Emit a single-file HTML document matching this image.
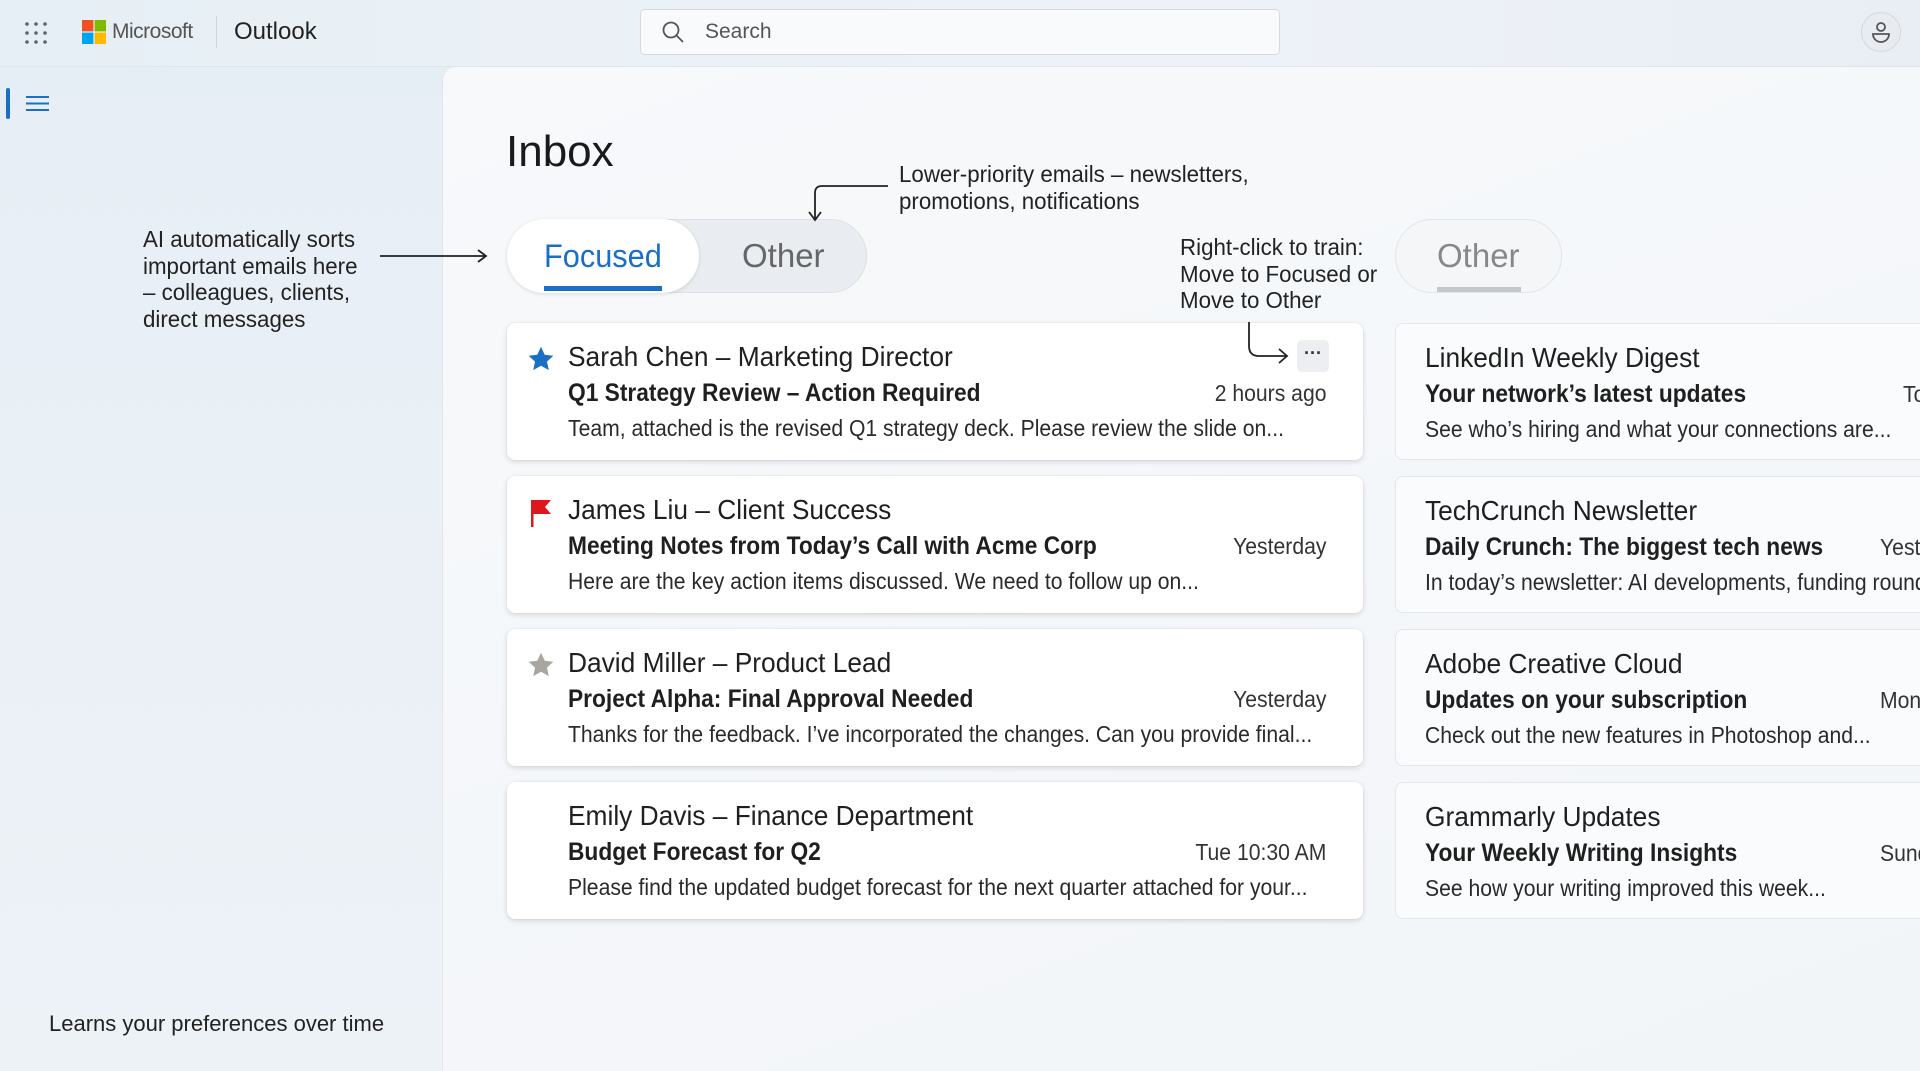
<!DOCTYPE html>
<html><head><meta charset="utf-8"><style>
*{margin:0;padding:0;box-sizing:border-box}
body{width:1920px;height:1071px;overflow:hidden;position:relative;background:linear-gradient(180deg,#e6eef5,#edf2f7);font-family:"Liberation Sans",sans-serif;color:#1f1f1f}
.a{position:absolute;white-space:nowrap}
.top{position:absolute;left:0;top:0;width:1920px;height:67px;background:linear-gradient(90deg,#e6eff5,#eef2f8 60%,#e9eef5);border-bottom:1px solid #dfe5ec}
.main{position:absolute;left:442px;top:67px;width:1478px;height:1004px;background:linear-gradient(160deg,#f7f9fb,#f2f5f8);border-top-left-radius:14px;border-left:1px solid #e2e7ee}
.card{position:absolute;left:507px;width:856px;height:137px;background:#fff;border-radius:8px;box-shadow:0 2px 6px rgba(0,0,0,.13),0 0 1px rgba(0,0,0,.15)}
.rc{position:absolute;left:1395px;width:560px;height:137px;background:#fafbfc;border-radius:8px;border:1px solid #e3e7ec}
.n,.s,.p,.t{white-space:nowrap;transform-origin:left center}
.n{position:absolute;left:61px;top:16px;font-size:28px;line-height:36px;transform:scaleX(.94)}
.s{position:absolute;left:61px;top:53px;font-size:25px;line-height:34px;font-weight:bold;transform:scaleX(.91)}
.p{position:absolute;left:61px;top:89px;font-size:23.5px;line-height:32px;color:#2a2a2a;transform:scaleX(.90)}
.t{position:absolute;right:37px;top:54px;font-size:23px;line-height:32px;color:#333;transform:scaleX(.92);transform-origin:right center}
.rc .n,.rc .s,.rc .p{left:29px}
.rc .t{right:auto;left:484px;transform-origin:left center}
.ic{position:absolute;left:28px;top:23px}
.ann{font-size:23px;line-height:26.5px;color:#222;transform:scaleX(.97);transform-origin:left top}
</style></head><body>
<div class="top"></div>
<svg class="a" style="left:24px;top:21px" width="24" height="24" viewBox="0 0 24 24" fill="#5a6470"><circle cx="3" cy="3" r="1.8"/><circle cx="12" cy="3" r="1.8"/><circle cx="21" cy="3" r="1.8"/><circle cx="3" cy="12" r="1.8"/><circle cx="12" cy="12" r="1.8"/><circle cx="21" cy="12" r="1.8"/><circle cx="3" cy="21" r="1.8"/><circle cx="12" cy="21" r="1.8"/><circle cx="21" cy="21" r="1.8"/></svg>
<svg class="a" style="left:82px;top:20px" width="24" height="24"><rect x="0" y="0" width="11.4" height="11.4" fill="#f25022"/><rect x="12.6" y="0" width="11.4" height="11.4" fill="#7fba00"/><rect x="0" y="12.6" width="11.4" height="11.4" fill="#00a4ef"/><rect x="12.6" y="12.6" width="11.4" height="11.4" fill="#ffb900"/></svg>
<div class="a" style="left:112px;top:18px;font-size:21px;color:#555;line-height:28px;letter-spacing:-0.5px">Microsoft</div>
<div class="a" style="left:216px;top:16px;width:1px;height:32px;background:#cfd6de"></div>
<div class="a" style="left:234px;top:16px;font-size:24px;color:#222;line-height:32px">Outlook</div>
<div class="a" style="left:640px;top:9px;width:640px;height:46px;background:#f8fafc;border:1px solid #d5dbe2;border-radius:5px"></div>
<svg class="a" style="left:661px;top:20px" width="24" height="24" fill="none" stroke="#555" stroke-width="1.8"><circle cx="10" cy="10" r="7.5"/><path d="M15.5 15.5 22 22"/></svg>
<div class="a" style="left:705px;top:18px;font-size:21px;color:#555;line-height:28px">Search</div>
<div class="a" style="left:1861px;top:12px;width:40px;height:40px;border-radius:50%;background:#e8ebef;border:1px solid #d3d8de"></div>
<svg class="a" style="left:1869px;top:20px" width="24" height="24" fill="none" stroke="#555" stroke-width="1.8"><circle cx="12" cy="7" r="4"/><path d="M4 14h16c0 5-4 8-8 8s-8-3-8-8z"/></svg>
<div class="a" style="left:6px;top:88px;width:4px;height:31px;background:#1a6fc4;border-radius:2px"></div>
<svg class="a" style="left:26px;top:95px" width="23" height="17" stroke="#1a6fc4" stroke-width="2"><path d="M0 2h23M0 8.5h23M0 15h23"/></svg>
<div class="main"></div>
<div class="a" style="left:506px;top:126px;font-size:44px;line-height:52px;color:#1a1a1a">Inbox</div>
<div class="a" style="left:507px;top:219px;width:360px;height:74px;border-radius:37px;background:#e9ecf0;border:1px solid #dde1e6"></div>
<div class="a" style="left:507px;top:219px;width:192px;height:74px;border-radius:37px;background:#fff;box-shadow:0 1px 4px rgba(0,0,0,.12)"></div>
<div class="a" style="left:544px;top:236px;font-size:32px;line-height:40px;color:#1a6fc4;transform:scaleX(.96);transform-origin:left">Focused</div>
<div class="a" style="left:544px;top:286px;width:118px;height:5px;background:#1a6fc4"></div>
<div class="a" style="left:742px;top:236px;font-size:33px;line-height:40px;color:#666">Other</div>
<div class="a ann" style="left:899px;top:161px">Lower-priority emails – newsletters,<br>promotions, notifications</div>
<svg class="a" style="left:800px;top:175px" width="100" height="55" fill="none" stroke="#222" stroke-width="1.8"><path d="M88 11H22Q15 11 15 18V44"/><path d="M9 37l6 8 6-8"/></svg>
<div class="a ann" style="left:143px;top:226px">AI automatically sorts<br>important emails here<br>– colleagues, clients,<br>direct messages</div>
<svg class="a" style="left:378px;top:248px" width="112" height="16" fill="none" stroke="#222" stroke-width="1.8"><path d="M2 8H108"/><path d="M100 2l8 6-8 6"/></svg>
<div class="a ann" style="left:1180px;top:234px">Right-click to train:<br>Move to Focused or<br>Move to Other</div>
<div class="a" style="left:1395px;top:219px;width:167px;height:74px;border-radius:37px;background:#f4f6f8;border:1px solid #e2e5e9"></div>
<div class="a" style="left:1437px;top:236px;font-size:33px;line-height:40px;color:#888">Other</div>
<div class="a" style="left:1437px;top:287px;width:84px;height:5px;background:#c4c7cb"></div>

<div class="card" style="top:323px">
<svg class="ic" style="left:20px;top:22px" width="28" height="28" viewBox="0 0 24 24" fill="#1a6fc4"><path d="M12 1.5l3.2 6.9 7.4.8-5.5 5 1.6 7.3L12 17.8l-6.7 3.7 1.6-7.3-5.5-5 7.4-.8z"/></svg>
<div class="n">Sarah Chen – Marketing Director</div><div class="s">Q1 Strategy Review – Action Required</div><div class="t">2 hours ago</div><div class="p">Team, attached is the revised Q1 strategy deck. Please review the slide on...</div>
<div class="a" style="left:790px;top:17px;width:32px;height:32px;border-radius:5px;background:#eceef1;text-align:center;font-size:18px;line-height:26px;color:#333;font-weight:bold">···</div>
</div>
<div class="card" style="top:476px">
<svg class="ic" style="left:22px;top:22px" width="24" height="30" fill="#e0161d"><path d="M2 2h20l-6 7 6 7H4.5v13H2z"/></svg>
<div class="n">James Liu – Client Success</div><div class="s">Meeting Notes from Today’s Call with Acme Corp</div><div class="t">Yesterday</div><div class="p">Here are the key action items discussed. We need to follow up on...</div>
</div>
<div class="card" style="top:629px">
<svg class="ic" style="left:20px;top:22px" width="28" height="28" viewBox="0 0 24 24" fill="#a9a6a2"><path d="M12 1.5l3.2 6.9 7.4.8-5.5 5 1.6 7.3L12 17.8l-6.7 3.7 1.6-7.3-5.5-5 7.4-.8z"/></svg>
<div class="n">David Miller – Product Lead</div><div class="s">Project Alpha: Final Approval Needed</div><div class="t">Yesterday</div><div class="p">Thanks for the feedback. I’ve incorporated the changes. Can you provide final...</div>
</div>
<div class="card" style="top:782px">
<div class="n">Emily Davis – Finance Department</div><div class="s">Budget Forecast for Q2</div><div class="t">Tue 10:30 AM</div><div class="p">Please find the updated budget forecast for the next quarter attached for your...</div>
</div>
<svg class="a" style="left:1240px;top:318px" width="52" height="50" fill="none" stroke="#222" stroke-width="1.8"><path d="M9 4V28Q9 38 19 38H46"/><path d="M39 31l8 7-8 7"/></svg>

<div class="rc" style="top:323px"><div class="n">LinkedIn Weekly Digest</div><div class="s">Your network’s latest updates</div><div class="t" style="left:507px">Today</div><div class="p">See who’s hiring and what your connections are...</div></div>
<div class="rc" style="top:476px"><div class="n">TechCrunch Newsletter</div><div class="s">Daily Crunch: The biggest tech news</div><div class="t">Yesterday</div><div class="p">In today’s newsletter: AI developments, funding rounds</div></div>
<div class="rc" style="top:629px"><div class="n">Adobe Creative Cloud</div><div class="s">Updates on your subscription</div><div class="t">Monday</div><div class="p">Check out the new features in Photoshop and...</div></div>
<div class="rc" style="top:782px"><div class="n">Grammarly Updates</div><div class="s">Your Weekly Writing Insights</div><div class="t">Sunday</div><div class="p">See how your writing improved this week...</div></div>

<div class="a" style="left:49px;top:1009px;font-size:22px;line-height:30px;color:#222">Learns your preferences over time</div>
</body></html>
